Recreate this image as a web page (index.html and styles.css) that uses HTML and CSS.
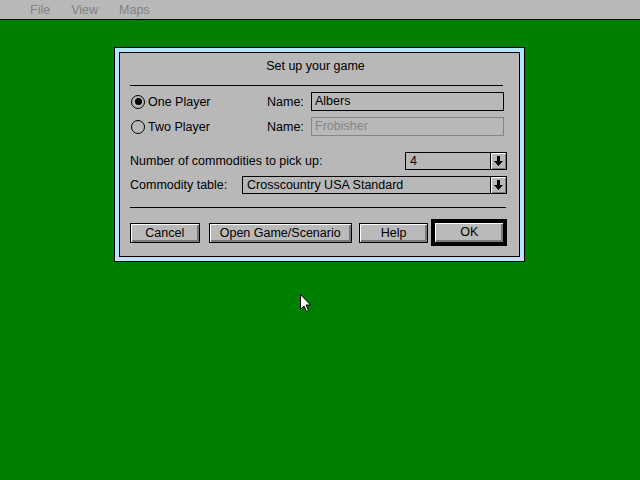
FILE: index.html
```html
<!DOCTYPE html>
<html lang="en">

<head>
    <meta charset="UTF-8">
    <title>Set up your game</title>
    <link rel="stylesheet" href="styles.css">
</head>

<body>
    <div class="menubar">
        <span class="menu">File</span>
        <span class="menu">View</span>
        <span class="menu">Maps</span>
    </div>

    <div class="dialog">
        <div class="panel">
            <div class="title">Set up your game</div>
            <div class="rule"></div>

            <div class="player_row first">
                <div class="radio_lbl"><span class="radio on"></span>One Player</div>
                <div class="name_lbl">Name:</div>
                <div class="field">Albers</div>
            </div>
            <div class="player_row">
                <div class="radio_lbl"><span class="radio"></span>Two Player</div>
                <div class="name_lbl">Name:</div>
                <div class="field off">Frobisher</div>
            </div>

            <div class="opt_row first">
                <div class="opt_lbl">Number of commodities to pick up:</div>
                <div class="combo small">
                    <span class="combo_val">4</span>
                    <span class="combo_btn">
                        <svg width="9" height="10" viewBox="0 0 9 10"><path d="M3 0h3v5h3L4.5 10 0 5h3z" fill="#000"/></svg>
                    </span>
                </div>
            </div>
            <div class="opt_row">
                <div class="opt_lbl">Commodity table:</div>
                <div class="combo wide">
                    <span class="combo_val">Crosscountry USA Standard</span>
                    <span class="combo_btn">
                        <svg width="9" height="10" viewBox="0 0 9 10"><path d="M3 0h3v5h3L4.5 10 0 5h3z" fill="#000"/></svg>
                    </span>
                </div>
            </div>

            <div class="rule second"></div>

            <div class="btn_row">
                <div class="btn b_cancel">Cancel</div>
                <div class="btn b_open">Open Game/Scenario</div>
                <div class="btn b_help">Help</div>
                <div class="btn b_ok">OK</div>
            </div>
        </div>
    </div>

    <svg class="cursor" width="12" height="19" viewBox="0 0 12 19">
        <path d="M0.5 0.5V15.5L4 12L6.5 17.5L8.5 16.5L6 11H10.5Z" fill="#fff" stroke="#000" stroke-width="1"/>
    </svg>
</body>

</html>
```

FILE: styles.css
```css
body {
    margin: 0px;
    padding: 0px;
    background-color: #008000;
    font-family: "Liberation Sans", Arial, sans-serif;
    font-size: 12.5px;
    color: #000;
}

.menubar {
    height: 19px;
    background-color: #b8b8b8;
    border-bottom: 1px solid #000;
    display: flex;
    align-items: center;
    padding-left: 30px;
    gap: 21px;
}

.menu {
    color: #828282;
}

.dialog {
    margin: 27px 0 0 114px;
    width: 401px;
    border: 1px solid #000;
    padding: 4px;
    background-color: #b4e6fa;
}

.panel {
    border: 1px solid #000;
    background-color: #b8b8b8;
    height: 203px;
    padding: 0 12px 0 10px;
}

.title {
    margin-top: 6px;
    height: 14px;
    line-height: 14px;
    text-align: center;
    padding-right: 6px;
}

.rule {
    margin-top: 12px;
    height: 1px;
    width: 373px;
    background-color: #000;
}

.rule.second {
    margin-top: 13px;
    width: 376px;
}

.player_row {
    display: flex;
    align-items: center;
    height: 19px;
    margin-top: 6px;
}

.player_row.first {
    margin-top: 6px;
}

.radio_lbl {
    width: 137px;
    display: flex;
    align-items: center;
}

.radio {
    width: 12px;
    height: 12px;
    border: 1px solid #000;
    border-radius: 50%;
    margin: 0 3px 0 1px;
    display: flex;
    align-items: center;
    justify-content: center;
}

.radio.on::after {
    content: "";
    width: 7px;
    height: 7px;
    border-radius: 50%;
    background-color: #000;
}

.name_lbl {
    width: 44px;
}

.field {
    width: 188px;
    height: 17px;
    line-height: 17px;
    border: 1px solid #000;
    padding-left: 3px;
}

.field.off {
    color: #868686;
    border-color: #868686;
}

.opt_row {
    display: flex;
    align-items: center;
    height: 18px;
    margin-top: 6px;
}

.opt_row.first {
    margin-top: 16px;
}

.opt_lbl {
    flex: 1;
}

.combo {
    height: 16px;
    border: 1px solid #000;
    display: flex;
}

.combo.small {
    width: 100px;
}

.combo.wide {
    width: 263px;
}

.combo_val {
    flex: 1;
    line-height: 16px;
    padding-left: 4px;
}

.combo_btn {
    width: 15px;
    border-left: 1px solid #000;
    box-shadow: inset 1px 1px #fff, inset -1px -1px #7a7a7a;
    display: flex;
    align-items: center;
    justify-content: center;
}

.btn_row {
    display: flex;
    align-items: center;
    height: 27px;
    margin-top: 11px;
}

.btn {
    height: 18px;
    line-height: 18px;
    border: 1px solid #000;
    box-shadow: inset 1px 1px #fff, inset -2px -2px #7a7a7a;
    text-align: center;
    background-color: #bababa;
}

.b_cancel {
    width: 68px;
}

.b_open {
    width: 142px;
    margin-left: 9px;
}

.b_help {
    width: 68px;
    margin-left: 7px;
}

.b_ok {
    width: 68px;
    height: 19px;
    line-height: 19px;
    border: 4px solid #000;
    margin-left: 3px;
}

.cursor {
    position: absolute;
    left: 300px;
    top: 294px;
}
```
